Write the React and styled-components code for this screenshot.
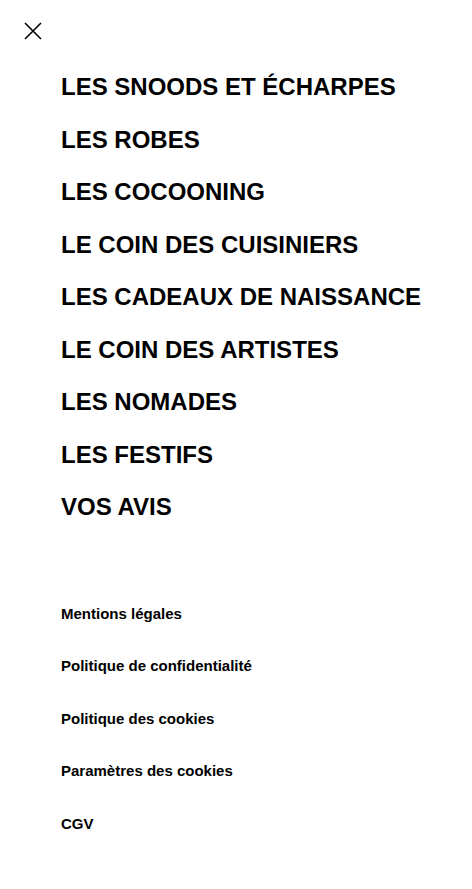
import React from 'react';
import styled, { createGlobalStyle } from 'styled-components';

const GlobalStyle = createGlobalStyle`
  body {
    margin: 0;
    background: #fff;
    font-family: "Liberation Sans", Arial, sans-serif;
    color: #000;
  }
`;

const menuItems = [
  'LES SNOODS ET ÉCHARPES',
  'LES ROBES',
  'LES COCOONING',
  'LE COIN DES CUISINIERS',
  'LES CADEAUX DE NAISSANCE',
  'LE COIN DES ARTISTES',
  'LES NOMADES',
  'LES FESTIFS',
  'VOS AVIS',
];

const legalLinks = [
  'Mentions légales',
  'Politique de confidentialité',
  'Politique des cookies',
  'Paramètres des cookies',
  'CGV',
];

const App = () => {
  return (
    <>
      <GlobalStyle />
      <StDrawer>
        <StTop>
          <StClose aria-label="Fermer">
            <svg width="18" height="18" viewBox="0 0 18 18" fill="none">
              <path d="M1 1L17 17M17 1L1 17" stroke="#000" strokeWidth="1.6" />
            </svg>
          </StClose>
        </StTop>
        {/* menu principal */}
        <StMenu>
          {menuItems.map(item => (
            <StMenuItem key={item}>{item}</StMenuItem>
          ))}
        </StMenu>
        <StLegal>
          {legalLinks.map(link => (
            <StLegalItem key={link}>{link}</StLegalItem>
          ))}
        </StLegal>
      </StDrawer>
    </>
  );
};

export default App;

const StDrawer = styled.div`
  width: 472px;
  min-height: 889px;
  background: #fff;
`;

const StTop = styled.div`
  height: 61px;
  display: flex;
  align-items: center;
  padding: 1px 0 0 24px;
  box-sizing: border-box;
`;

const StClose = styled.button`
  border: 0;
  background: transparent;
  padding: 0;
  width: 18px;
  height: 18px;
  display: flex;
  cursor: pointer;
`;

const StMenu = styled.ul`
  list-style: none;
  margin: 0;
  padding: 0 0 0 61px;
`;

const StMenuItem = styled.li`
  height: 52.5px;
  line-height: 52.5px;
  font-size: 24px;
  font-weight: 700;
  white-space: nowrap;
`;

const StLegal = styled.ul`
  list-style: none;
  margin: 54px 0 0;
  padding: 0 0 0 61px;
`;

const StLegalItem = styled.li`
  height: 52.5px;
  line-height: 52.5px;
  font-size: 15px;
  font-weight: 700;
`;
